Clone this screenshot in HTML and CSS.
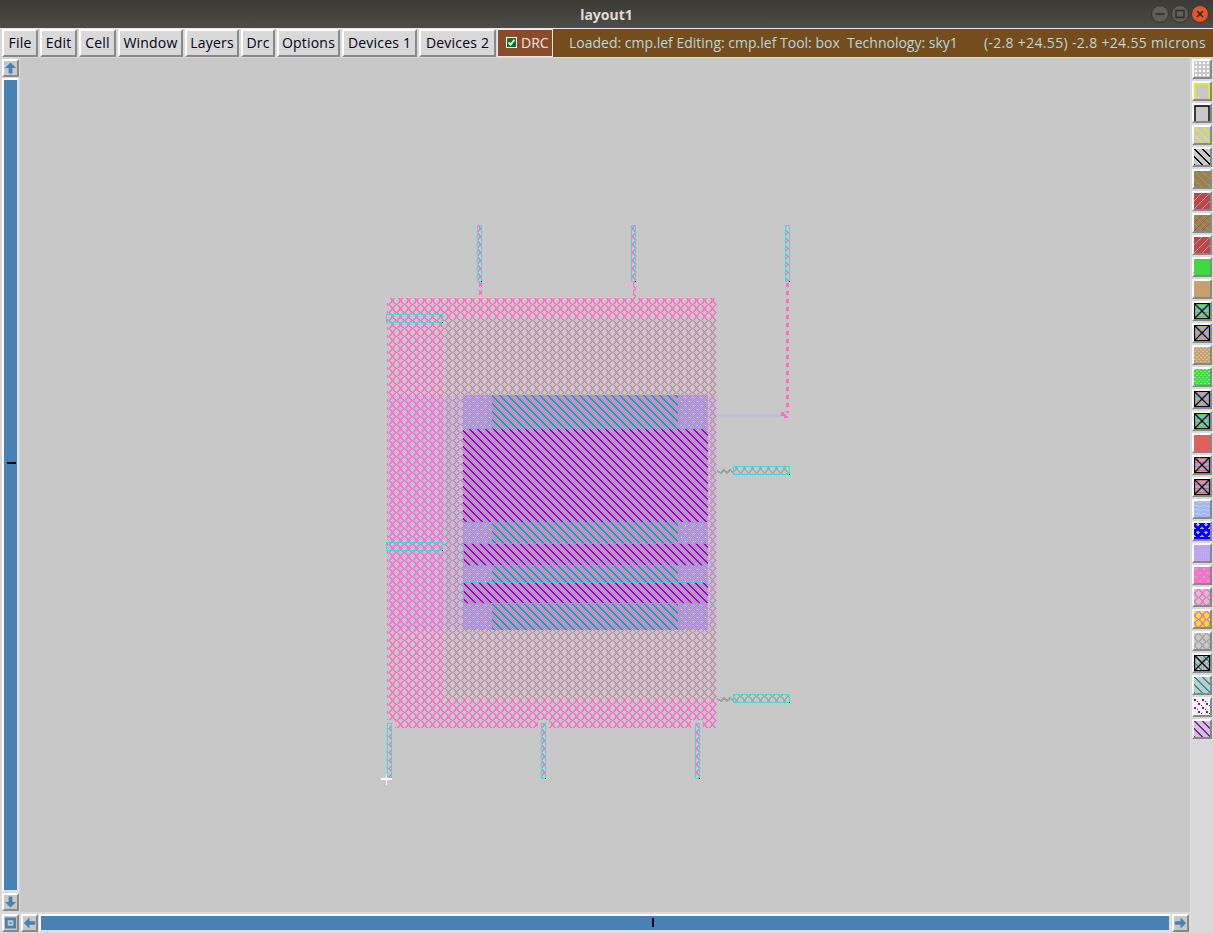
FILE: index.html
```html
<!DOCTYPE html>
<html>
	<head>
		<title>layout1</title>
		<link rel="stylesheet" href="styles.css">
	</head>
	<body>
		<svg class="defs" width="0" height="0">
			<defs>
				<path id="lat" d="M3 0h3v1h-3z M2 1h2v1h-2z M5 1h2v1h-2z M1 2h2v1h-2z M6 2h2v1h-2z M0 3h2v1h-2z M7 3h1v1h-1z M0 4h2v1h-2z M7 4h1v1h-1z M0 5h2v1h-2z M7 5h1v1h-1z M1 6h2v1h-2z M6 6h2v1h-2z M2 7h2v1h-2z M5 7h2v1h-2z"/>
				<path id="latdither" d="M3 0h1v1h-1z M5 0h1v1h-1z M2 1h1v1h-1z M6 1h1v1h-1z M1 2h1v1h-1z M7 2h1v1h-1z M0 3h1v1h-1z M1 4h1v1h-1z M7 4h1v1h-1z M0 5h1v1h-1z M1 6h1v1h-1z M7 6h1v1h-1z M2 7h1v1h-1z M6 7h1v1h-1z"/>
				<path id="diag" d="M0 0h2v1h-2z M1 1h2v1h-2z M2 2h2v1h-2z M3 3h2v1h-2z M4 4h2v1h-2z M5 5h2v1h-2z M6 6h2v1h-2z M7 7h1v1h-1z M0 7h1v1h-1z"/>
				<path id="thin" d="M0 0h1v1h-1z M1 1h1v1h-1z M2 2h1v1h-1z M3 3h1v1h-1z M4 4h1v1h-1z M5 5h1v1h-1z M6 6h1v1h-1z M7 7h1v1h-1z"/>
				<path id="thinup" d="M7 0h1v1h-1z M6 1h1v1h-1z M5 2h1v1h-1z M4 3h1v1h-1z M3 4h1v1h-1z M2 5h1v1h-1z M1 6h1v1h-1z M0 7h1v1h-1z"/>
				<pattern id="p-pink" width="8" height="8" patternUnits="userSpaceOnUse"><use href="#lat" fill="#ff6ec7"/></pattern>
				<pattern id="p-grey" width="8" height="8" patternUnits="userSpaceOnUse"><use href="#lat" fill="#e890bc"/><use href="#latdither" fill="#a09a9c"/></pattern>
				<pattern id="p-lattice-grey" width="8" height="8" patternUnits="userSpaceOnUse"><use href="#lat" fill="#a8a8a8"/></pattern>
				<pattern id="p-lilac" width="2" height="2" patternUnits="userSpaceOnUse"><path d="M0 0h1v1h-1z M1 1h1v1h-1z" fill="#c0b0f0"/></pattern>
				<pattern id="p-dots" width="8" height="8" patternUnits="userSpaceOnUse"><rect width="8" height="8" fill="#a898f0"/><path d="M0 0h3v3h-3z" fill="#9c9cff"/><path d="M4 4h3v3h-3z" fill="#9c9cff"/><path d="M1 1h1v1h-1z M5 5h1v1h-1z" fill="#e4dcff"/></pattern>
				<pattern id="p-teal" width="8" height="8" patternUnits="userSpaceOnUse"><use href="#diag" fill="#10a0a0"/></pattern>
				<pattern id="p-purple" width="8" height="8" patternUnits="userSpaceOnUse"><use href="#diag" fill="#a000c8"/></pattern>
				<pattern id="p-mix" width="4" height="4" patternUnits="userSpaceOnUse"><rect width="4" height="4" fill="#b090e8"/><path d="M0 0h2v1h-2z M2 2h2v1h-2z" fill="#d090e0"/></pattern>
				<pattern id="s-dots" width="4" height="4" patternUnits="userSpaceOnUse"><path d="M1 1h2v2h-2z" fill="#fff"/></pattern>
				<pattern id="s-yellow" width="8" height="8" patternUnits="userSpaceOnUse"><use href="#thin" fill="#e8e820"/><use href="#thin" x="1" fill="#e8e820"/></pattern>
				<pattern id="s-black" width="8" height="8" patternUnits="userSpaceOnUse"><use href="#diag" fill="#000"/></pattern>
				<pattern id="s-green" width="8" height="8" patternUnits="userSpaceOnUse"><rect width="8" height="8" fill="#a87858"/><use href="#thin" fill="#40d040"/></pattern>
				<pattern id="s-red" width="8" height="8" patternUnits="userSpaceOnUse"><rect width="8" height="8" fill="#b84850"/><use href="#thinup" fill="#c8a070"/></pattern>
				<pattern id="s-cross" width="8" height="8" patternUnits="userSpaceOnUse"><rect width="8" height="8" fill="#a87858"/><use href="#thin" fill="#40d040"/><use href="#thinup" fill="#b84850"/></pattern>
				<pattern id="s-bgreen" width="8" height="4" patternUnits="userSpaceOnUse"><rect width="8" height="4" fill="#88aef0"/><path d="M0 1h8v1h-8z" fill="#40d040"/></pattern>
				<pattern id="s-btan" width="8" height="4" patternUnits="userSpaceOnUse"><rect width="8" height="4" fill="#88aef0"/><path d="M0 1h8v1h-8z" fill="#c8a070"/></pattern>
				<pattern id="s-bred" width="8" height="4" patternUnits="userSpaceOnUse"><rect width="8" height="4" fill="#88aef0"/><path d="M0 1h8v1h-8z" fill="#e06060"/></pattern>
				<pattern id="s-brick-tan" width="4" height="4" patternUnits="userSpaceOnUse"><rect width="4" height="4" fill="#c8a070"/><path d="M0 0h2v1h-2z M2 2h2v1h-2z" fill="#c8c8c8"/></pattern>
				<pattern id="s-brick-green" width="4" height="4" patternUnits="userSpaceOnUse"><rect width="4" height="4" fill="#40d840"/><path d="M0 0h2v1h-2z M2 2h2v1h-2z" fill="#c8c8c8"/></pattern>
				<pattern id="s-wave" width="8" height="4" patternUnits="userSpaceOnUse"><rect width="8" height="4" fill="#a0b8f0"/><path d="M0 0h4v1h-4z M4 1h4v1h-4z" fill="#c8c8e8"/></pattern>
				<pattern id="s-blue" width="8" height="8" patternUnits="userSpaceOnUse"><rect width="8" height="8" fill="#0000f8"/><path d="M2 1h4v1h-4z M3 2h2v1h-2z M0 5h2v1h-2z M6 5h2v1h-2z M0 4h1v1h-1z M7 4h1v1h-1z M3 0h2v1h-2z" fill="#c0a8f0"/></pattern>
				<pattern id="s-check" width="2" height="2" patternUnits="userSpaceOnUse"><rect width="2" height="2" fill="#c0a8f0"/><path d="M0 0h1v1h-1z" fill="#b8a0e8"/></pattern>
				<pattern id="s-splat" width="8" height="8" patternUnits="userSpaceOnUse"><rect width="8" height="8" fill="#ff6ec7"/><path d="M1 1h2v2h-2z M5 5h2v2h-2z" fill="#a8b8d8"/></pattern>
				<pattern id="s-purple" width="8" height="8" patternUnits="userSpaceOnUse"><path d="M0 0h2v2h-2z M4 4h2v2h-2z M3 2h1v1h-1z M7 6h1v1h-1z" fill="#a000c8"/></pattern>
				<g id="xbox">
					<path d="M0.5 0.5h15v15h-15z M1 1l14 14 M15 1l-14 14" fill="none" stroke="#000" stroke-width="1.2"/>
				</g>
			</defs>
		</svg>

		<div class="titlebar">
			<span class="title">layout1</span>
			<div class="winbtns">
				<svg class="winbtn" viewBox="0 0 18 18"><circle cx="9" cy="9" r="8.5" fill="#5f5e59" stroke="#35342f"/><path d="M4.5 9h9" stroke="#2c2b28" stroke-width="1.6"/></svg>
				<svg class="winbtn" viewBox="0 0 18 18"><circle cx="9" cy="9" r="8.5" fill="#5f5e59" stroke="#35342f"/><path d="M5 5.5h8v7h-8z" fill="none" stroke="#2c2b28" stroke-width="1.4"/></svg>
				<svg class="winbtn" viewBox="0 0 18 18"><circle cx="9" cy="9" r="8.5" fill="#e4572a" stroke="#35342f"/><path d="M6 6l6 6 M12 6l-6 6" stroke="#3a2010" stroke-width="1.6"/></svg>
			</div>
		</div>

		<div class="menubar">
			<div class="menus">
				<button class="menu">File</button>
				<button class="menu">Edit</button>
				<button class="menu">Cell</button>
				<button class="menu">Window</button>
				<button class="menu">Layers</button>
				<button class="menu">Drc</button>
				<button class="menu">Options</button>
				<button class="menu">Devices 1</button>
				<button class="menu">Devices 2</button>
			</div>
			<div class="drc">
				<svg class="drc_box" viewBox="0 0 11 11"><rect width="11" height="11" fill="#fff"/><rect x="1" y="1" width="9" height="9" fill="#0a7a20"/><path d="M2.5 5.5l2 2.2 4-5" fill="none" stroke="#fff" stroke-width="1.8"/></svg>
				<span>DRC</span>
			</div>
			<div class="status">
				<span>Loaded: cmp.lef Editing: cmp.lef Tool: box  Technology: sky1</span>
				<span class="coords">(-2.8 +24.55) -2.8 +24.55 microns</span>
			</div>
		</div>

		<div class="main">
			<div class="vscroll">
				<div class="sbtn"><svg viewBox="0 0 14 14"><path d="M7 1l6 6h-4v6h-4v-6h-4z" fill="#4682b4"/></svg></div>
				<div class="vslider"><i class="vnotch"></i></div>
				<div class="sbtn"><svg viewBox="0 0 14 14"><path d="M7 13l6-6h-4v-6h-4v6h-4z" fill="#4682b4"/></svg></div>
			</div>

			<svg class="canvas" viewBox="20 58 1170 854" shape-rendering="crispEdges">
				<!-- well -->
				<rect x="387" y="395" width="330" height="235" fill="url(#p-lilac)"/>
				<rect x="463" y="395" width="29" height="235" fill="url(#p-dots)"/>
				<rect x="678" y="395" width="30" height="235" fill="url(#p-dots)"/>
				<rect x="492" y="395" width="186" height="235" fill="url(#p-mix)"/>
				<rect x="463" y="429" width="245" height="93" fill="url(#p-mix)"/>
				<rect x="463" y="543" width="245" height="23" fill="url(#p-mix)"/>
				<rect x="463" y="582" width="245" height="21" fill="url(#p-mix)"/>
				<!-- metal -->
				<rect x="387" y="298" width="330" height="430" fill="url(#p-pink)"/>
				<rect x="443" y="318" width="274" height="382" fill="url(#p-grey)"/>
				<!-- notches -->
				<path d="M387 720h8v8h-8z M538 720h11v8h-11z M691 720h12v8h-12z" fill="#c8c8c8"/>
				<!-- poly and diff -->
				<rect x="492" y="395" width="186" height="34" fill="url(#p-teal)"/>
				<rect x="492" y="522" width="186" height="21" fill="url(#p-teal)"/>
				<rect x="492" y="566" width="186" height="16" fill="url(#p-teal)"/>
				<rect x="492" y="603" width="186" height="27" fill="url(#p-teal)"/>
				<rect x="463" y="429" width="245" height="93" fill="url(#p-purple)"/>
				<rect x="463" y="543" width="245" height="23" fill="url(#p-purple)"/>
				<path class="hair" d="M708 543.5H463.5V565.5H708"/>
				<rect x="463" y="582" width="245" height="21" fill="url(#p-purple)"/>
				<path class="hair" d="M708 582.5H463.5V603.5H708"/>
				<!-- labels -->
				<rect class="pin" x="386.5" y="314.5" width="56" height="8"/>
				<rect class="pin" x="386.5" y="542.5" width="56" height="8"/>
				<!-- stubs -->
				<rect x="479" y="282" width="3" height="16" fill="url(#p-pink)"/>
				<rect x="633" y="282" width="3" height="16" fill="url(#p-pink)"/>
				<path class="dash" d="M787 283V413"/>
				<rect x="717" y="414" width="64" height="3" fill="url(#p-lilac)"/>
				<path d="M781 412h3v2h2v2h2v2h-4v-2h-3z" fill="#ff6ec7"/>
				<path class="squiggle" d="M717 471l4 2 3-3 3 3 3-3 3 2"/>
				<path class="squiggle" d="M717 699l4 2 3-3 3 3 3-3 3 2"/>
				<!-- pins -->
				<rect x="477" y="225" width="5" height="57" fill="url(#p-pink)"/>
				<rect class="pin" x="477.5" y="225.5" width="4" height="56"/>
				<rect x="631" y="225" width="5" height="57" fill="url(#p-pink)"/>
				<rect class="pin" x="631.5" y="225.5" width="4" height="56"/>
				<rect x="785" y="225" width="5" height="57" fill="url(#p-pink)"/>
				<rect class="pin" x="785.5" y="225.5" width="4" height="56"/>
				<rect x="387" y="723" width="5" height="56" fill="url(#p-pink)"/>
				<rect class="pin" x="387.5" y="723.5" width="4" height="55"/>
				<rect x="541" y="723" width="5" height="56" fill="url(#p-pink)"/>
				<rect class="pin" x="541.5" y="723.5" width="4" height="55"/>
				<rect x="695" y="723" width="5" height="56" fill="url(#p-pink)"/>
				<rect class="pin" x="695.5" y="723.5" width="4" height="55"/>
				<rect x="733" y="466" width="57" height="9" fill="url(#p-lattice-grey)"/>
				<rect class="pin" x="733.5" y="466.5" width="56" height="8"/>
				<rect x="733" y="694" width="57" height="9" fill="url(#p-lattice-grey)"/>
				<rect class="pin" x="733.5" y="694.5" width="56" height="8"/>
				<path d="M481 281h1v1h-1z M635 281h1v1h-1z M789 281h1v1h-1z M391 778h1v1h-1z M545 778h1v1h-1z M699 778h1v1h-1z M789 474h1v1h-1z M789 702h1v1h-1z M442 322h1v1h-1z M442 550h1v1h-1z" fill="#10306a"/>
				<!-- cursor -->
				<path d="M381 779h11 M386.5 774v11" stroke="#fff" stroke-width="1.5" fill="none"/>
			</svg>

			<div class="palette">
				<div class="swatch"><svg><rect class="fill" fill="url(#s-dots)"/></svg></div>
				<div class="swatch"><svg><path class="cap" stroke="#f0f000" d="M1 16V1H15V16"/></svg></div>
				<div class="swatch"><svg><path class="cap" stroke="#000" d="M1 16V1H15V16"/></svg></div>
				<div class="swatch"><svg><rect class="fill" fill="url(#s-yellow)"/></svg></div>
				<div class="swatch"><svg><rect class="fill" fill="url(#s-black)"/></svg></div>
				<div class="swatch"><svg><rect class="fill" fill="url(#s-green)"/></svg></div>
				<div class="swatch"><svg><rect class="fill" fill="url(#s-red)"/></svg></div>
				<div class="swatch"><svg><rect class="fill" fill="url(#s-cross)"/></svg></div>
				<div class="swatch"><svg><rect class="fill" fill="url(#s-red)"/></svg></div>
				<div class="swatch"><svg><rect class="fill" fill="#40d840"/></svg></div>
				<div class="swatch"><svg><rect class="fill" fill="#c8a070"/></svg></div>
				<div class="swatch"><svg><rect class="fill" fill="url(#s-bgreen)"/><use href="#xbox"/></svg></div>
				<div class="swatch"><svg><rect class="fill" fill="url(#s-btan)"/><use href="#xbox"/></svg></div>
				<div class="swatch"><svg><rect class="fill" fill="url(#s-brick-tan)"/></svg></div>
				<div class="swatch"><svg><rect class="fill" fill="url(#s-brick-green)"/></svg></div>
				<div class="swatch"><svg><rect class="fill" fill="url(#s-btan)"/><use href="#xbox"/></svg></div>
				<div class="swatch"><svg><rect class="fill" fill="url(#s-bgreen)"/><use href="#xbox"/></svg></div>
				<div class="swatch"><svg><rect class="fill" fill="#e06060"/></svg></div>
				<div class="swatch"><svg><rect class="fill" fill="url(#s-bred)"/><use href="#xbox"/></svg></div>
				<div class="swatch"><svg><rect class="fill" fill="url(#s-bred)"/><use href="#xbox"/></svg></div>
				<div class="swatch"><svg><rect class="fill" fill="url(#s-wave)"/></svg></div>
				<div class="swatch"><svg><rect class="fill" fill="url(#s-blue)"/></svg></div>
				<div class="swatch"><svg><rect class="fill" fill="url(#s-check)"/></svg></div>
				<div class="swatch"><svg><rect class="fill" fill="url(#s-splat)"/></svg></div>
				<div class="swatch"><svg><rect class="fill" fill="url(#p-pink)"/></svg></div>
				<div class="swatch"><svg><rect class="fill" fill="#e8e820"/><rect class="fill" fill="url(#p-pink)"/></svg></div>
				<div class="swatch"><svg><rect class="fill" fill="url(#p-lattice-grey)"/></svg></div>
				<div class="swatch"><svg><rect class="fill" fill="url(#p-lattice-grey)"/><rect class="fill" fill="url(#p-teal)"/><use href="#xbox"/></svg></div>
				<div class="swatch"><svg><rect class="fill" fill="url(#p-teal)"/></svg></div>
				<div class="swatch"><svg><rect class="fill" fill="#fff"/><rect class="fill" fill="url(#s-purple)"/></svg></div>
				<div class="swatch"><svg><rect class="fill" fill="url(#p-purple)"/></svg></div>
			</div>
		</div>

		<div class="hscroll">
			<div class="sbtn sbtn_corner"><svg viewBox="0 0 14 14"><path d="M1 1h12v12h-12z M4 4v6h6v-6z" fill="#4682b4" fill-rule="evenodd"/><rect x="6" y="6" width="2" height="2" fill="#4682b4"/></svg></div>
			<div class="sbtn"><svg viewBox="0 0 14 14"><path d="M1 7l6-6v4h6v4h-6v4z" fill="#4682b4"/></svg></div>
			<div class="hslider"><i class="hnotch"></i></div>
			<div class="sbtn"><svg viewBox="0 0 14 14"><path d="M13 7l-6-6v4h-6v4h6v4z" fill="#4682b4"/></svg></div>
		</div>
	</body>
</html>
```

FILE: styles.css
```css
* {
	box-sizing: border-box;
}
html, body {
	margin: 0;
	height: 933px;
	overflow: hidden;
	background: #d9d9d9;
}
.defs {
	position: absolute;
}
.titlebar {
	position: relative;
	height: 28px;
	background: linear-gradient(#3b3a36, #4d4c47);
	display: flex;
	align-items: center;
	justify-content: center;
}
.title {
	font: bold 14px "Noto Sans", sans-serif;
	color: #dfdbd2;
}
.winbtns {
	position: absolute;
	right: 4px;
	top: 5px;
	display: flex;
	gap: 2px;
}
.winbtn {
	width: 18px;
	height: 18px;
}
.menubar {
	height: 30px;
	display: flex;
	border-top: 1px solid #e8e8e8;
	border-bottom: 1px solid #d9d9d9;
	font: 14px "Open Sans", sans-serif;
}
.menus {
	display: grid;
	grid-template-columns: 36px 37px 37px 65px 54px 34px 63px 75px 77px;
	gap: 2px;
	padding-left: 2px;
	width: 497px;
}
.menu {
	font: inherit;
	letter-spacing: 0.2px;
	white-space: nowrap;
	color: #000018;
	background: #d9d9d9;
	padding: 0 0 2px;
	border: 2px solid;
	border-color: #fff #888 #888 #fff;
}
.drc {
	width: 56px;
	background: #8b4a2a;
	border: 1px solid #e8e8e8;
	color: #f0e8e0;
	display: flex;
	align-items: center;
	gap: 4px;
	padding: 0 0 1px 8px;
}
.drc_box {
	width: 11px;
	height: 11px;
}
.status {
	flex: 1;
	background: #754c1c;
	color: #b8d8dc;
	display: flex;
	justify-content: space-between;
	align-items: center;
	padding: 0 7px 2px 16px;
	white-space: pre;
}
.coords {
	letter-spacing: 0.33px;
}
.main {
	height: 854px;
	display: flex;
}
.vscroll {
	width: 20px;
	padding: 1px 1px 1px 2px;
	display: flex;
	flex-direction: column;
	gap: 1px;
}
.sbtn {
	flex: none;
	width: 17px;
	height: 18px;
	background: #c8c8c8;
	border: 2px solid;
	border-color: #fff #888 #888 #fff;
}
.sbtn svg {
	display: block;
	width: 13px;
	height: 14px;
}
.vslider {
	flex: 1;
	background: #4682b4;
	border: 2px solid;
	border-color: #fff #e0e0e0 #e0e0e0 #fff;
	position: relative;
}
.vnotch {
	position: absolute;
	left: 3px;
	top: 382px;
	width: 9px;
	height: 2px;
	background: #000;
}
.canvas {
	width: 1170px;
	height: 854px;
	background: #c8c8c8;
	display: block;
}
.hair {
	fill: none;
	stroke: #40d0e0;
	stroke-opacity: 0.7;
	stroke-width: 1;
}
.pin {
	fill: none;
	stroke: #40dcdc;
	stroke-width: 1;
}
.dash {
	fill: none;
	stroke: #ff6ec7;
	stroke-width: 3;
	stroke-dasharray: 4 4;
}
.squiggle {
	fill: none;
	stroke: #a0a0a0;
	stroke-width: 1.5;
}
.palette {
	width: 23px;
	padding: 1px 1px 0 2px;
	display: flex;
	flex-direction: column;
	gap: 2px;
}
.swatch {
	width: 20px;
	height: 20px;
	flex: none;
	background: #c8c8c8;
	border: 2px solid;
	border-color: #fff #888 #888 #fff;
}
.swatch svg {
	display: block;
	width: 16px;
	height: 16px;
}
.fill {
	width: 16px;
	height: 16px;
}
.cap {
	fill: none;
	stroke-width: 1.4;
}
.hscroll {
	height: 21px;
	display: flex;
	align-items: center;
	gap: 1px;
	padding-left: 2px;
}
.sbtn_corner {
	margin-right: 1px;
}
.hslider {
	width: 1132px;
	height: 18px;
	background: #4682b4;
	border: 2px solid;
	border-color: #fff #e0e0e0 #e0e0e0 #fff;
	position: relative;
}
.hnotch {
	position: absolute;
	left: 611px;
	top: 2px;
	width: 2px;
	height: 9px;
	background: #000;
}
```
